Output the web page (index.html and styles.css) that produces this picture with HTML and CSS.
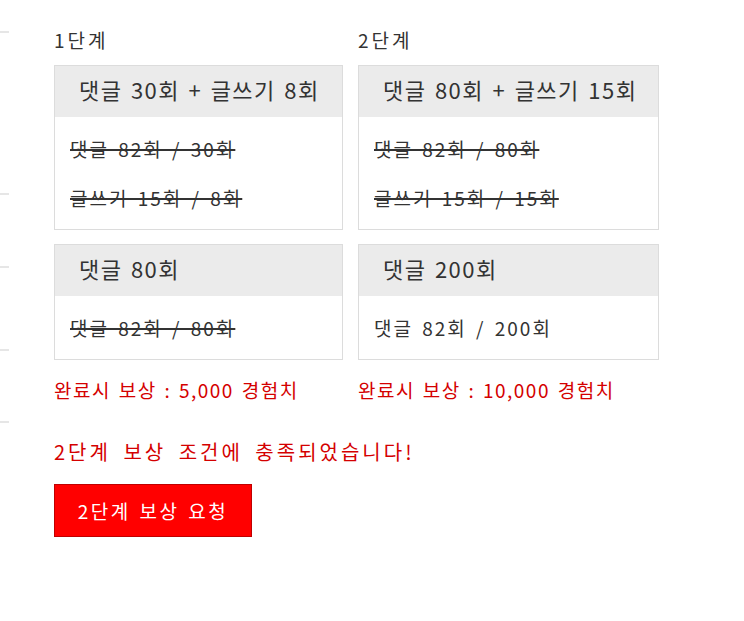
FILE: index.html
```html
<!DOCTYPE html>
<html>
<head>
<meta charset="utf-8">
<title>단계별 보상</title>
<link rel="stylesheet" href="styles.css">
</head>
<body>
<div class="page">
  <aside class="side">
    <div class="side-item"></div>
    <div class="side-item"></div>
    <div class="side-item"></div>
    <div class="side-item"></div>
    <div class="side-item"></div>
  </aside>

  <div class="content">
    <div class="stages">
      <h3 class="stage-title">1단계</h3>
      <h3 class="stage-title">2단계</h3>

      <div class="mission">
        <div class="mission-head">댓글 30회 + 글쓰기 8회</div>
        <ul class="mission-body">
          <li class="done">댓글 82회 / 30회</li>
          <li class="done">글쓰기 15회 / 8회</li>
        </ul>
      </div>
      <div class="mission">
        <div class="mission-head">댓글 80회 + 글쓰기 15회</div>
        <ul class="mission-body">
          <li class="done">댓글 82회 / 80회</li>
          <li class="done">글쓰기 15회 / 15회</li>
        </ul>
      </div>

      <div class="mission">
        <div class="mission-head">댓글 80회</div>
        <ul class="mission-body">
          <li class="done">댓글 82회 / 80회</li>
        </ul>
      </div>
      <div class="mission">
        <div class="mission-head">댓글 200회</div>
        <ul class="mission-body">
          <li>댓글 82회 / 200회</li>
        </ul>
      </div>

      <p class="reward">완료시 보상 : 5,000 경험치</p>
      <p class="reward">완료시 보상 : 10,000 경험치</p>
    </div>

    <p class="notice">2단계 보상 조건에 충족되었습니다!</p>
    <button class="btn-reward" type="button">2단계 보상 요청</button>
  </div>
</div>
</body>
</html>
```

FILE: styles.css
```css
body { margin: 0; background: #fff; color: #333; font: 18px/24px "Noto Sans CJK KR", "Liberation Sans", sans-serif; }
.page { display: flex; }

.side { width: 9px; padding-top: 31px; flex: none; }
.side-item { box-sizing: border-box; border-top: 2px solid #e6e6e6; }
.side-item:nth-child(1) { height: 162px; }
.side-item:nth-child(2) { height: 73px; }
.side-item:nth-child(3) { height: 83px; }
.side-item:nth-child(4) { height: 72px; }
.side-item:nth-child(5) { height: 10px; }

.content { padding: 28px 0 0 45px; }

.stages { display: grid; grid-template-columns: 289px 301px; column-gap: 15px; row-gap: 14px; }
.stage-title { margin: 0 0 -1px; font-size: 19px; font-weight: normal; line-height: 24px; letter-spacing: 3px; }

.mission { border: 1px solid #dcdcdc; }
.mission-head { height: 47px; padding: 0 24px 4px; background: #ebebeb; font-size: 22px; line-height: 47px; letter-spacing: 1.5px; word-spacing: 2px; white-space: nowrap; }
.mission-body { margin: 0; padding: 7px 15px; list-style: none; }
.mission-body li { font-size: 19px; line-height: 49px; letter-spacing: 2px; word-spacing: 3px; white-space: nowrap; }
.mission-body li.done { text-decoration: line-through; text-decoration-thickness: 2px; }

.reward { margin: 4px 0 0; color: #d40000; font-size: 19px; line-height: 24px; letter-spacing: 1.5px; word-spacing: 2px; }

.notice { margin: 38px 0 0; color: #d40000; font-size: 20px; line-height: 24px; letter-spacing: 3px; word-spacing: 5px; }

.btn-reward { margin-top: 20px; width: 198px; height: 53px; padding: 0; border: 1px solid #c00000; background: #ff0000; color: #fff; font: 19px/24px "Noto Sans CJK KR", "Liberation Sans", sans-serif; letter-spacing: 2.5px; word-spacing: 2px; cursor: pointer; }
```
